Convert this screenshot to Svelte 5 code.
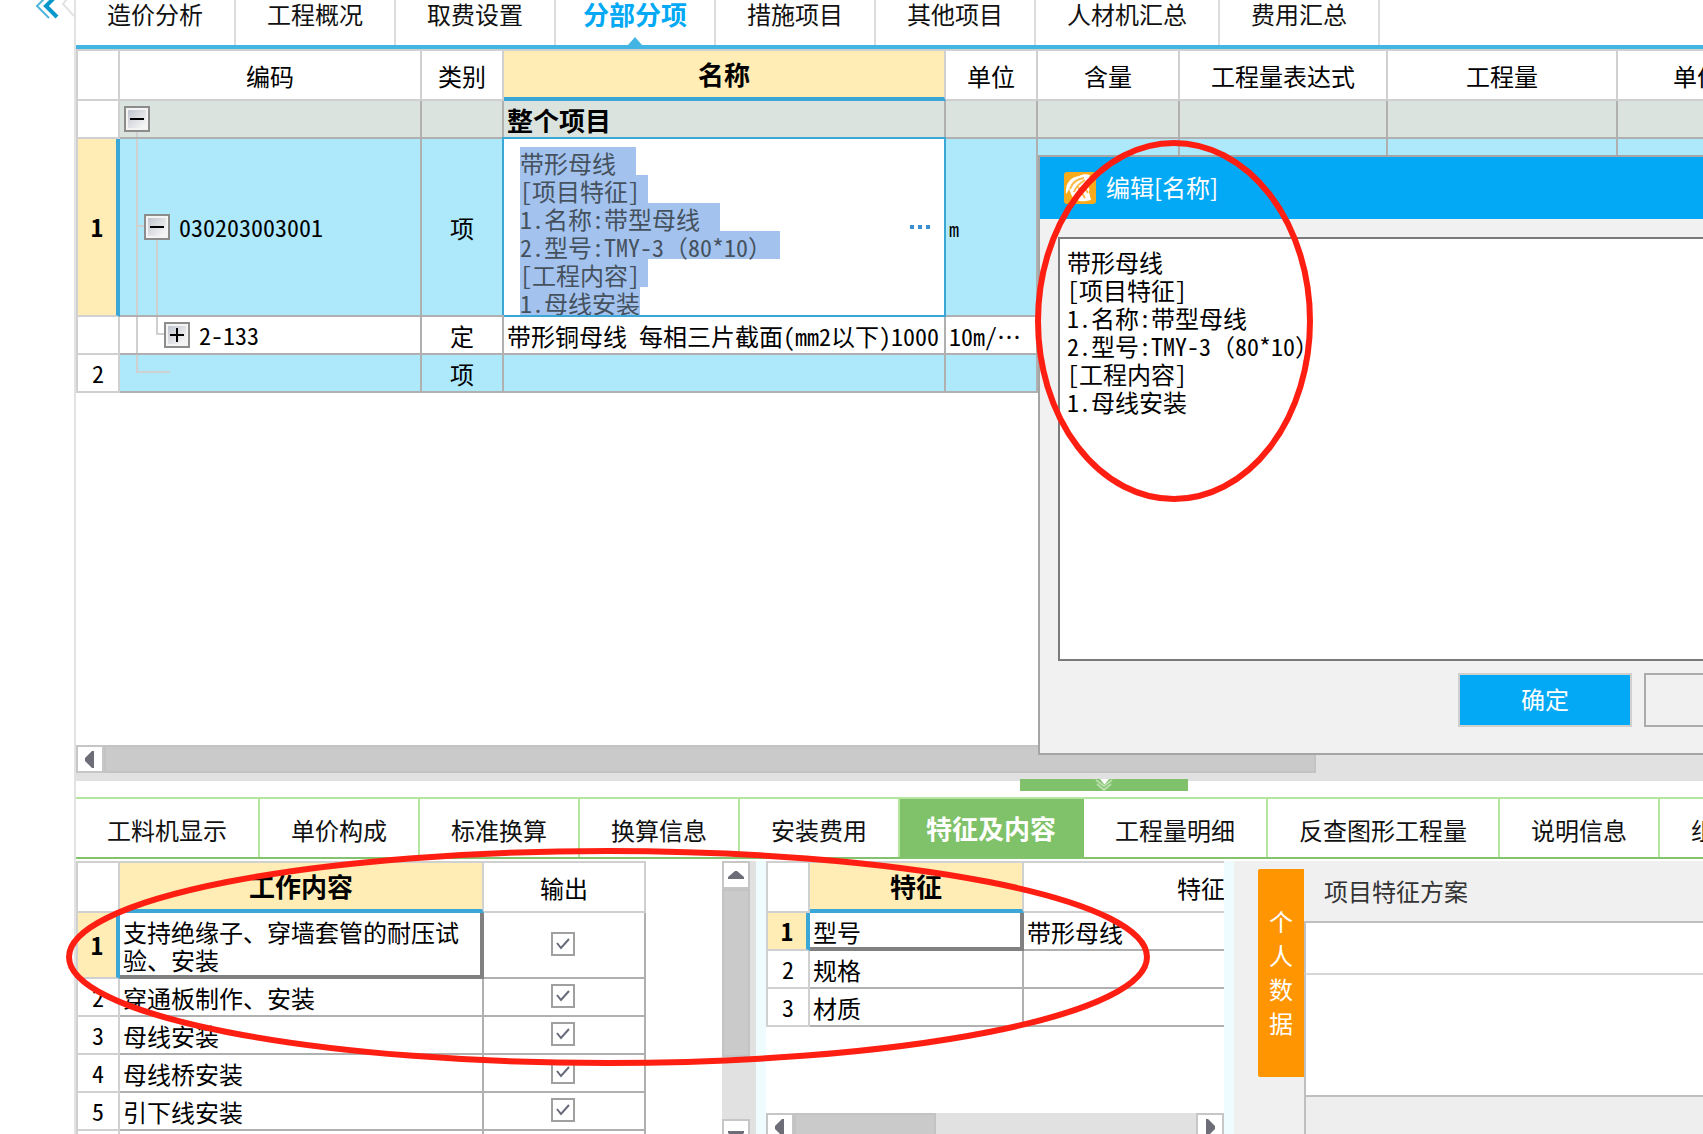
<script lang="ts">
	const mainTabs = [
		"造价分析",
		"工程概况",
		"取费设置",
		"分部分项",
		"措施项目",
		"其他项目",
		"人材机汇总",
		"费用汇总",
	];
	const detailTabs = [
		"工料机显示",
		"单价构成",
		"标准换算",
		"换算信息",
		"安装费用",
		"特征及内容",
		"工程量明细",
		"反查图形工程量",
		"说明信息",
		"组价方案",
	];
	const extraColumns = ["含量", "工程量表达式", "工程量", "单价"];

	let mainTab = $state("分部分项");
	let detailTab = $state("特征及内容");

	const description = [
		"带形母线",
		"[项目特征]",
		"1.名称:带型母线",
		"2.型号:TMY-3（80*10）",
		"[工程内容]",
		"1.母线安装",
	].join("\n");

	let inlineText = $state(description);
	let dialogText = $state(description);

	// one highlight band per line, a bit wider where the line break is included
	const bands = $derived(
		inlineText
			.split("\n")
			.map((line, i, lines) => {
				const text = [...line].reduce((sum, c) => sum + (c.charCodeAt(0) < 128 ? 12 : 24), 0);
				const tail = i === lines.length - 1 ? 0 : /[\]）]$/.test(line) ? 8 : 20;
				return `linear-gradient(#a3c2ee, #a3c2ee) 16px ${i * 28}px / ${text + tail}px 28px no-repeat`;
			})
			.join(", "),
	);

	let works = $state([
		{ name: "支持绝缘子、穿墙套管的耐压试验、安装", output: true },
		{ name: "穿通板制作、安装", output: true },
		{ name: "母线安装", output: true },
		{ name: "母线桥安装", output: true },
		{ name: "引下线安装", output: true },
		{ name: "", output: true },
	]);

	const features = [
		{ name: "型号", value: "带形母线" },
		{ name: "规格", value: "" },
		{ name: "材质", value: "" },
	];
</script>

{#snippet toggle(open: boolean)}
	<button class="toggle" aria-label={open ? "收起" : "展开"}>
		<svg viewBox="0 0 26 26" width="26" height="26">
			<path d="M6 13h14" />
			{#if !open}<path d="M13 6v14" />{/if}
		</svg>
	</button>
{/snippet}

{#snippet arrow(label: string, d: string)}
	<button class="arrow" aria-label={label}>
		<svg viewBox="0 0 24 24" width="24" height="24"><path {d} /></svg>
	</button>
{/snippet}

<div class="app">
	<aside>
		<button class="collapse" aria-label="收起导航">
			<svg viewBox="0 0 40 20" width="40" height="20">
				<path class="far" d="M16 -7L3 6L15 18" />
				<path class="near" d="M25 -7L12 6L23 17" />
				<path class="edge" d="M33 -1L29 4L40 16" />
			</svg>
		</button>
	</aside>

	<main>
		<nav class="tabs main-tabs">
			{#each mainTabs as tab}
				<button class:active={tab === mainTab} onclick={() => (mainTab = tab)}>{tab}</button>
			{/each}
		</nav>

		<section class="upper">
			<table class="grid items">
				<colgroup>
					<col class="c-num" /><col class="c-code" /><col class="c-kind" /><col class="c-name" />
					<col class="c-unit" /><col class="c-content" /><col class="c-expr" /><col class="c-qty" /><col class="c-price" />
				</colgroup>
				<thead>
					<tr>
						<th></th>
						<th>编码</th>
						<th>类别</th>
						<th class="current">名称</th>
						<th>单位</th>
						{#each extraColumns as column}<th>{column}</th>{/each}
					</tr>
				</thead>
				<tbody>
					<tr class="root">
						<th></th>
						<td class="code tree-root"><div class="level-0">{@render toggle(true)}</div></td>
						<td></td>
						<td class="title">整个项目</td>
						<td></td>
						{#each extraColumns as _}<td></td>{/each}
					</tr>
					<tr class="item selected">
						<th class="current">1</th>
						<td class="code tree-item"><div class="level-1">{@render toggle(true)}030203003001</div></td>
						<td class="center">项</td>
						<td class="editing">
							<div class="editor">
								<textarea aria-label="名称" style:background={bands} bind:value={inlineText} spellcheck="false"></textarea>
								<button class="more" aria-label="编辑名称"><i></i><i></i><i></i></button>
							</div>
						</td>
						<td class="small">m</td>
						{#each extraColumns as _}<td></td>{/each}
					</tr>
					<tr>
						<th></th>
						<td class="code tree-child"><div class="level-2">{@render toggle(false)}2-133</div></td>
						<td class="center">定</td>
						<td>带形铜母线 每相三片截面(mm2以下)1000</td>
						<td lang="zh-CN">10m/<span class="dots">…</span></td>
						{#each extraColumns as _}<td></td>{/each}
					</tr>
					<tr class="item">
						<th>2</th>
						<td class="code tree-last"></td>
						<td class="center">项</td>
						<td></td>
						<td></td>
						{#each extraColumns as _}<td></td>{/each}
					</tr>
				</tbody>
			</table>

			<div class="dialog" role="dialog" aria-labelledby="dialog-title">
				<header>
					<svg class="logo" viewBox="0 0 32 32" width="32" height="32">
						<rect width="32" height="32" rx="3" fill="#f9ab1b" />
						<path d="M2 22C1 12 6 5 15 4c3-2 8-2 11-1l-1 3c3 0 3 2 1 3l-5 4c4 1 5 4 4 7l2 8-5 1c-7 1-13-1-15-7l-2-5c-1 2-2 4-3 5z" fill="#fff" />
						<path d="M6 17C8 11 13 7 20 6M10 20c2-6 6-9 11-12M14 15l7 11M19 13l5 8" fill="none" stroke="#f9bb4c" stroke-width="2" />
					</svg>
					<h2 id="dialog-title">编辑[名称]</h2>
				</header>
				<textarea aria-label="编辑[名称]" bind:value={dialogText} spellcheck="false"></textarea>
				<footer>
					<button class="ok">确定</button>
					<button class="cancel">取消</button>
				</footer>
			</div>
		</section>

		<div class="hscroll">
			{@render arrow("向左滚动", "M16 4v17h-2L7 14v-3L14 4z")}
			<div class="thumb"></div>
		</div>

		<div class="splitter">
			<button class="handle" aria-label="收起面板">
				<svg viewBox="0 0 20 12" width="20" height="12">
					<path class="tip" d="M6 0h9l-4 5h-1z" />
					<path d="M2 1l8 6l8 -6M3 5l7 6l7 -6" />
				</svg>
			</button>
		</div>

		<nav class="tabs detail-tabs">
			{#each detailTabs as tab}
				<button class:active={tab === detailTab} onclick={() => (detailTab = tab)}>{tab}</button>
			{/each}
		</nav>

		<section class="lower">
			<div class="works">
				<table class="grid">
					<colgroup><col class="c-num" /><col class="c-work" /><col class="c-output" /></colgroup>
					<thead>
						<tr><th></th><th class="current">工作内容</th><th>输出</th></tr>
					</thead>
					<tbody>
						{#each works as work, i}
							<tr>
								<th class:current={i === 0}>{i + 1}</th>
								<td class:focused={i === 0}>{work.name}</td>
								<td class="center">
									<input type="checkbox" aria-label="输出 {work.name}" bind:checked={work.output} />
								</td>
							</tr>
						{/each}
					</tbody>
				</table>
				<div class="vscroll">
					{@render arrow("向上滚动", "M4 16h16v-2l-7-6h-2l-7 6z")}
					<div class="thumb"></div>
					{@render arrow("向下滚动", "M4 10h16v2l-7 6h-2l-7-6z")}
				</div>
			</div>

			<div class="features">
				<div class="features-body">
					<table class="grid">
						<colgroup><col class="c-num" /><col class="c-feature" /><col class="c-value" /></colgroup>
						<thead>
							<tr><th></th><th class="current">特征</th><th>特征值</th></tr>
						</thead>
						<tbody>
							{#each features as feature, i}
								<tr>
									<th class:current={i === 0}>{i + 1}</th>
									<td class:focused={i === 0}>{feature.name}</td>
									<td>{feature.value}</td>
								</tr>
							{/each}
						</tbody>
					</table>
				</div>
				<div class="hscroll">
					{@render arrow("向左滚动", "M16 4v17h-2L7 14v-3L14 4z")}
					<div class="thumb"></div>
					{@render arrow("向右滚动", "M8 4v17h2l7-7v-3L10 4z")}
				</div>
			</div>

			<div class="personal">
				<button class="side-tab">个人数据</button>
				<div class="plan">
					<h3>项目特征方案</h3>
					<div class="plan-bar"></div>
					<div class="plan-list"></div>
					<div class="plan-foot"></div>
				</div>
			</div>
		</section>
	</main>

	<svg class="marks" aria-hidden="true">
		<ellipse cx="1174" cy="321" rx="136" ry="178" />
		<ellipse cx="608" cy="957" rx="539" ry="106" />
	</svg>
</div>

<style>
	:global(body) {
		margin: 0;
		overflow: hidden;
	}

	.app {
		--line: #d0d0d0;
		--cell: #b0b0b0;
		--blue: #3ba7d6;
		--yellow: #ffedb5;
		position: relative;
		display: flex;
		height: 100vh;
		overflow: hidden;
		background: #fff;
		color: #000;
		font-family: "Noto Sans Mono CJK SC", "Noto Sans CJK SC", sans-serif;
		font-size: 24px;
		line-height: 28px;

		& *,
		& *::before,
		& *::after {
			box-sizing: border-box;
		}
	}

	button,
	textarea {
		margin: 0;
		padding: 0;
		border: none;
		border-radius: 0;
		outline: none;
		background: none;
		color: inherit;
		font: inherit;
	}

	svg {
		display: block;
	}

	aside {
		flex: 0 0 76px;
		display: flex;
		justify-content: flex-end;
		align-items: flex-start;
		border-right: 2px solid #e2e2e2;
	}

	.collapse svg {
		fill: none;
		stroke-width: 2;
	}

	.far {
		stroke: #4fb5dc;
	}

	.near {
		stroke: #0698cb;
		stroke-width: 4;
	}

	.edge {
		stroke: #e2e2e2;
	}

	main {
		flex: 1;
		min-width: 0;
		display: flex;
		flex-direction: column;
	}

	/* tab bars */
	.tabs {
		display: flex;
		flex: none;

		& button {
			flex: none;
			padding: 0 31px;
			color: #111;
			white-space: nowrap;
		}

		& .active {
			padding: 0 27px;
			font-size: 26px;
			font-weight: bold;
		}
	}

	.main-tabs {
		height: 49px;
		border-bottom: 4px solid #43b5e2;

		& button {
			position: relative;
			padding-bottom: 17px;
			border-right: 2px solid #dcdcdc;
		}

		& .active {
			padding-bottom: 19px;
			color: #03a9f4;
		}

		& .active::after {
			content: "";
			position: absolute;
			bottom: 0;
			left: 72px;
			border: 7px solid transparent;
			border-top: none;
			border-bottom: 8px solid #43b5e2;
		}
	}

	.detail-tabs {
		height: 62px;
		border-top: 2px solid #b4e6a0;
		border-bottom: 2px solid #83c36e;

		& button {
			padding-top: 4px;
			border-right: 2px solid #b4e6a0;
		}

		& .active {
			padding: 0 26px;
			border-color: #7fc269;
			background: #7fc269;
			color: #fff;
		}
	}

	/* data grids */
	.grid {
		table-layout: fixed;
		width: 0;
		border-spacing: 0;
		border-top: 2px solid var(--line);
		border-left: 2px solid var(--line);

		& th,
		& td {
			height: 38px;
			padding: 2px 3px 0;
			border-right: 2px solid var(--cell);
			border-bottom: 2px solid var(--cell);
			text-align: left;
			font-weight: normal;
		}

		& th {
			padding: 0;
			border-color: var(--line);
			text-align: center;
		}

		& thead th {
			height: 50px;
			padding-top: 2px;
		}

		& thead .current {
			padding-top: 0;
			border-bottom: 4px solid var(--blue);
			background: var(--yellow);
			font-size: 26px;
			font-weight: bold;
		}

		& tbody .current {
			border-right: 4px solid var(--blue);
			background: var(--yellow);
			font-weight: bold;
		}

		& .center {
			text-align: center;
		}

		& .focused {
			padding: 5px 0 1px 3px;
			border-right: 4px solid #808080;
			border-bottom: 4px solid #808080;
		}
	}

	.c-num {
		width: 42px;
	}

	.c-code {
		width: 302px;
	}

	.c-kind {
		width: 82px;
	}

	.c-name {
		width: 442px;
	}

	.c-unit {
		width: 92px;
	}

	.c-content {
		width: 142px;
	}

	.c-expr {
		width: 208px;
	}

	.c-qty {
		width: 230px;
	}

	.c-price {
		width: 160px;
	}

	.c-work {
		width: 364px;
	}

	.c-output {
		width: 162px;
	}

	.c-feature {
		width: 214px;
	}

	.c-value {
		width: 380px;
	}

	.upper {
		position: relative;
		flex: 1;
		min-height: 0;
	}

	.items {
		& td {
			white-space: nowrap;
		}

		& .root td {
			background-color: #dae3de;
		}

		& .item td {
			background-color: #ade8fb;
		}

		& .selected td {
			height: 178px;
		}

		& .title {
			font-size: 26px;
			font-weight: bold;
		}

		& .small {
			padding-top: 4px;
			font-size: 20px;
		}

		& .dots {
			font-family: "Noto Sans CJK SC", sans-serif;
		}

		& .selected .editing {
			padding: 0;
			border-color: var(--blue);
			background: #fff;
			box-shadow: -2px -2px 0 var(--blue), 0 -2px 0 var(--blue);
		}

		& .code {
			padding: 0;
			background-image: linear-gradient(var(--line), var(--line)), linear-gradient(var(--line), var(--line)),
				linear-gradient(var(--line), var(--line));
			background-repeat: no-repeat;
		}

		& .code div {
			display: flex;
			align-items: center;
			gap: 9px;
		}

		& .level-0 {
			padding-left: 4px;
		}

		& .level-1 {
			padding-left: 24px;
		}

		& .level-2 {
			padding-left: 44px;
		}

		/* connector lines: trunk, branch, sub-trunk */
		& .tree-root {
			background-position: 16px 30px;
			background-size: 2px 100%, 0 0, 0 0;
		}

		& .tree-item {
			background-position: 16px 0, 16px 86px, 36px 100px;
			background-size: 2px 100%, 8px 2px, 2px 100%;
		}

		& .tree-child {
			background-position: 16px 0, 36px 16px, 36px 0;
			background-size: 2px 100%, 8px 2px, 2px 18px;
		}

		& .tree-last {
			background-position: 16px 0, 16px 16px, 0 0;
			background-size: 2px 18px, 34px 2px, 0 0;
		}
	}

	.toggle {
		width: 26px;
		height: 26px;
		border: 2px solid #8c8c8c;
		background: linear-gradient(135deg, #b9bec9, #f4f4f4 80%);
		box-shadow: inset 0 0 0 2px #f4f4f4;

		& svg {
			margin: -2px;
			stroke: #000;
			stroke-width: 2;
		}
	}

	.editor {
		display: flex;
		height: 176px;
		padding-top: 8px;

		& textarea {
			flex: 1;
			min-width: 0;
			padding: 2px 0 0 16px;
			overflow: hidden;
			resize: none;
			color: #45525e;
		}
	}

	.more {
		display: flex;
		align-items: center;
		gap: 4px;
		padding: 0 14px 8px 4px;

		& i {
			width: 4px;
			height: 4px;
			background: #3c8fd0;
		}
	}

	/* edit window */
	.dialog {
		position: absolute;
		top: 106px;
		left: 962px;
		display: flex;
		flex-direction: column;
		width: 800px;
		height: 600px;
		border: 2px solid #a5a5a5;
		background: #f1f1f1;

		& header {
			display: flex;
			align-items: center;
			gap: 10px;
			height: 62px;
			padding-left: 24px;
			background: #03a9f4;
			color: #fff;
		}

		& h2 {
			margin: 0;
			padding-bottom: 2px;
			font-family: "Noto Sans CJK SC", sans-serif;
			font-size: 24px;
			font-weight: normal;
		}

		& textarea {
			flex: 1;
			margin: 18px 18px 0;
			padding: 9px 7px;
			border: 2px solid #7a7a7a;
			background: #fff;
			resize: none;
		}

		& footer {
			display: flex;
			gap: 12px;
			padding: 12px 0 26px 418px;
		}

		& footer button {
			flex: none;
			width: 174px;
			height: 54px;
			padding-bottom: 2px;
			border: 2px solid #ababab;
		}

		& footer .ok {
			border-color: #cfcfcf;
			background: #03a9f4;
			color: #fff;
		}
	}

	/* scroll bars */
	.arrow {
		flex: none;
		width: 28px;
		height: 28px;
		border: 2px solid #c6c6c6;
		background: #fff;

		& svg {
			fill: #6d6d78;
		}
	}

	.hscroll {
		display: flex;
		flex: none;
		height: 28px;
		background: #e1e1e1;

		& .thumb {
			width: 1212px;
			border: 2px solid #c3c3c3;
			background: #cacaca;
		}
	}

	.vscroll {
		display: flex;
		flex-direction: column;
		width: 34px;
		background: #e1e1e1;

		& .thumb {
			width: 28px;
			height: 168px;
			margin: 0 0 auto;
			border: 2px solid #c3c3c3;
			background: #cacaca;
		}
	}

	.splitter {
		flex: none;
		height: 24px;
		border-top: 8px solid #e1e1e1;

		& .handle {
			position: relative;
			top: -2px;
			display: flex;
			justify-content: center;
			width: 168px;
			height: 12px;
			margin-left: 944px;
			background: #80c26b;
		}

		& svg {
			fill: none;
			stroke: #b9dfad;
			stroke-width: 2;
		}

		& .tip {
			fill: #fff;
			stroke: none;
		}
	}

	/* detail panes */
	.lower {
		display: flex;
		flex: 0 0 275px;
		min-height: 0;
		padding-top: 2px;
	}

	.works {
		display: flex;
		justify-content: space-between;
		align-items: flex-start;
		flex: 0 0 680px;
		overflow: hidden;

		& .vscroll {
			height: 286px;
		}
	}

	.features {
		display: flex;
		flex-direction: column;
		flex: 0 0 478px;
		min-width: 0;
		height: 280px;
		border: solid #effcff;
		border-width: 0 10px;

		& .features-body {
			flex: 1;
			overflow: hidden;
		}

		& .thumb {
			width: 142px;
			margin-right: auto;
		}
	}

	.personal {
		display: flex;
		align-items: flex-start;
		flex: 1;
		min-width: 0;
		padding-left: 24px;
		background: #f0f0f0;
	}

	.side-tab {
		flex: none;
		width: 46px;
		height: 208px;
		margin-top: 8px;
		padding: 0 11px 2px;
		border-radius: 2px 0 0 2px;
		background: #ff9500;
		color: #fff;
		line-height: 34px;
	}

	.plan {
		display: flex;
		flex-direction: column;
		flex: 1;
		align-self: stretch;

		& h3 {
			margin: 0;
			padding: 16px 20px;
			color: #333;
			font-size: 24px;
			font-weight: normal;
		}

		& div {
			border-left: 2px solid #bfbfbf;
			background: #fff;
		}

		& .plan-bar {
			height: 52px;
			border-top: 2px solid #bfbfbf;
		}

		& .plan-list {
			height: 124px;
			border-top: 2px solid #d6d6d6;
			border-bottom: 2px solid #bfbfbf;
		}

		& .plan-foot {
			flex: 1;
			background: #eee;
		}
	}

	input[type="checkbox"] {
		appearance: none;
		display: inline-block;
		width: 24px;
		height: 24px;
		margin: 0 2px 0 0;
		border: 2px solid #a0a0a0;
		vertical-align: top;

		&:checked {
			background: url("data:image/svg+xml,%3Csvg xmlns='http://www.w3.org/2000/svg' viewBox='0 0 20 20'%3E%3Cpath d='M4 9l4 5l8-9' fill='none' stroke='%23666a7a' stroke-width='2'/%3E%3C/svg%3E");
		}
	}

	.marks {
		position: absolute;
		inset: 0;
		width: 100%;
		height: 100%;
		pointer-events: none;
		fill: none;
		stroke: #ff1f12;
		stroke-width: 6;
	}
</style>
